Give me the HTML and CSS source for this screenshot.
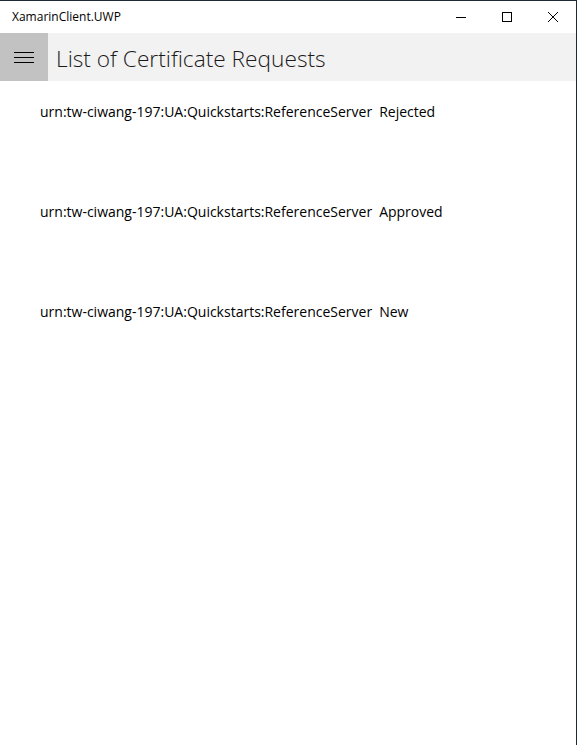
FILE: index.html
```html
<!DOCTYPE html>
<html>
<head>
<meta charset="utf-8">
<link rel="stylesheet" href="styles.css">
</head>
<body>
<div class="window">
  <div class="titlebar">
    <span class="apptitle">XamarinClient.UWP</span>
    <div class="controls">
      <div class="ctl"><svg width="10" height="10" viewBox="0 0 10 10"><path d="M0 5.5H10" stroke="#000" stroke-width="1"/></svg></div>
      <div class="ctl"><svg width="10" height="10" viewBox="0 0 10 10"><rect x="0.5" y="0.5" width="9" height="9" fill="none" stroke="#000" stroke-width="1"/></svg></div>
      <div class="ctl"><svg width="10" height="10" viewBox="0 0 10 10"><path d="M0 0L10 10M10 0L0 10" stroke="#000" stroke-width="1"/></svg></div>
    </div>
  </div>
  <div class="header">
    <div class="burger">
      <svg width="20" height="11" viewBox="0 0 20 11"><path d="M0 0.5H20M0 5.5H20M0 10.5H20" stroke="#000" stroke-width="1"/></svg>
    </div>
    <h1 class="pagetitle">List of Certificate Requests</h1>
  </div>
  <div class="list">
    <div class="row"><span>urn:tw-ciwang-197:UA:Quickstarts:ReferenceServer</span><span>Rejected</span></div>
    <div class="row"><span>urn:tw-ciwang-197:UA:Quickstarts:ReferenceServer</span><span>Approved</span></div>
    <div class="row"><span>urn:tw-ciwang-197:UA:Quickstarts:ReferenceServer</span><span>New</span></div>
  </div>
</div>
</body>
</html>
```

FILE: styles.css
```css
html, body {
  margin: 0;
  padding: 0;
  background: #fff;
}
body {
  font-family: "Open Sans", "Noto Sans", sans-serif;
  color: #000;
}
.window {
  width: 576px;
  height: 744px;
  border-top: 1px solid #1e2a36;
  border-right: 1px solid #1e2a36;
  display: flex;
  flex-direction: column;
  overflow: hidden;
}
.titlebar {
  height: 32px;
  display: flex;
  align-items: center;
  justify-content: space-between;
  background: #fff;
}
.apptitle {
  font-size: 12px;
  padding-left: 12px;
  margin-top: -2px;
}
.controls {
  display: flex;
  height: 32px;
}
.ctl {
  width: 46px;
  height: 32px;
  display: flex;
  align-items: center;
  justify-content: center;
}
.ctl svg { display: block; }
.header {
  height: 48px;
  background: #f2f2f2;
  display: flex;
  align-items: center;
}
.burger {
  width: 48px;
  height: 48px;
  background: #c2c2c2;
  display: flex;
  align-items: center;
  justify-content: center;
}
.burger svg { display: block; }
.pagetitle {
  margin: 2px 0 0 8px;
  font-size: 22.7px;
  font-weight: 300;
  color: #1a1a1a;
}
.list {
  display: flex;
  flex-direction: column;
  padding-left: 40px;
  padding-top: 21px;
}
.row {
  height: 100px;
  display: flex;
  gap: 7px;
  font-size: 14px;
  line-height: 20px;
  color: #000;
}
```
